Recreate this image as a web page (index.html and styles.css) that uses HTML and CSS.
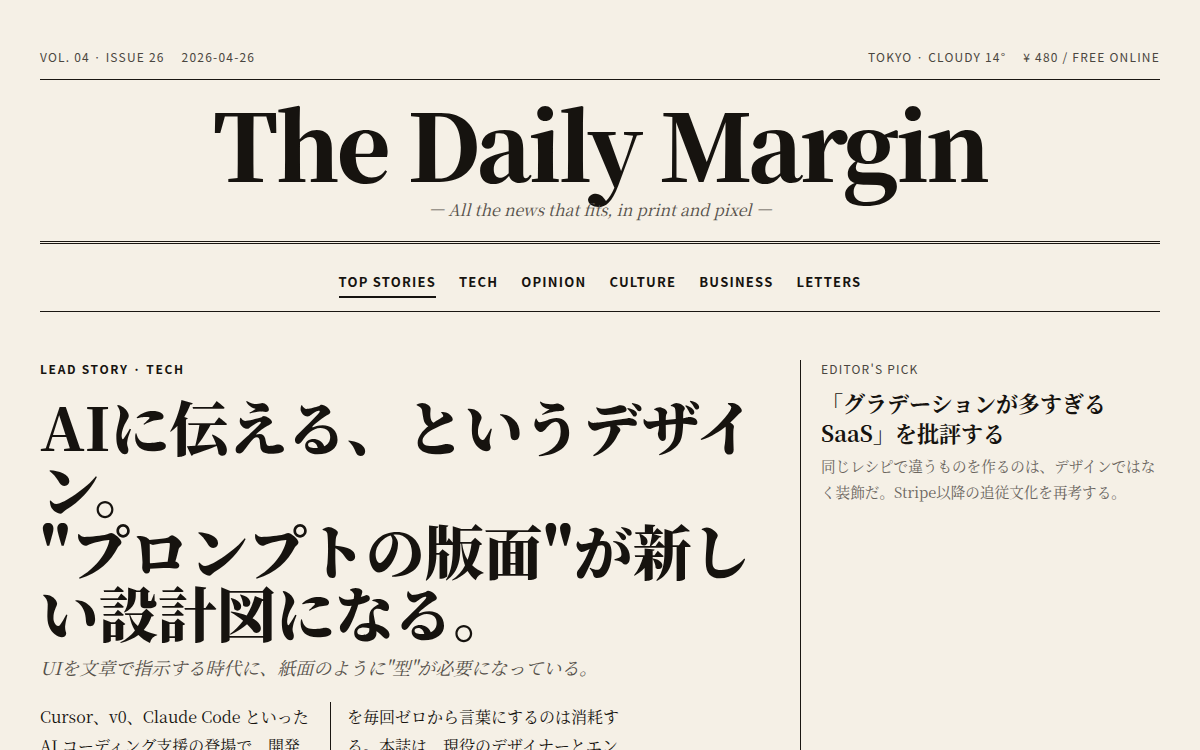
FILE: index.html
```html
<!DOCTYPE html>
<html lang="ja">
<head>
<meta charset="utf-8">
<title>The Daily Margin</title>
<link rel="stylesheet" href="styles.css">
</head>
<body>
<div class="page">
  <header class="meta">
    <div class="meta-group"><span>VOL. 04 · ISSUE 26</span><span>2026-04-26</span></div>
    <div class="meta-group"><span>TOKYO · CLOUDY 14°</span><span>¥ 480 / FREE ONLINE</span></div>
  </header>
  <div class="masthead">
    <h1 class="title">The Daily Margin</h1>
    <p class="tagline">— All the news that fits, in print and pixel —</p>
  </div>
  <nav class="nav">
    <a class="nav-item active">TOP STORIES</a>
    <a class="nav-item">TECH</a>
    <a class="nav-item">OPINION</a>
    <a class="nav-item">CULTURE</a>
    <a class="nav-item">BUSINESS</a>
    <a class="nav-item">LETTERS</a>
  </nav>
  <main class="main">
    <article class="lead">
      <div class="kicker">LEAD STORY · TECH</div>
      <h2 class="headline">AIに伝える、というデザイン。<br>"プロンプトの版面"が新しい設計図になる。</h2>
      <p class="dek">UIを文章で指示する時代に、紙面のように"型"が必要になっている。</p>
      <div class="body">
        <div class="col col-first">
          <p>Cursor、v0、Claude Code といったAI コーディング支援の登場で、開発者は画面の見た目を言葉で伝えるようになった。しかし、毎回の指示がばらばらでは結果も安定しない。余白、書体、色、階層。その一つひとつ</p>
        </div>
        <div class="col col-second">
          <p>を毎回ゼロから言葉にするのは消耗する。本誌は、現役のデザイナーとエンジニアに話を聞いた。</p>
        </div>
      </div>
    </article>
    <aside class="side">
      <div class="side-kicker">EDITOR'S PICK</div>
      <h3 class="side-title">「グラデーションが多すぎるSaaS」を批評する</h3>
      <p class="side-text">同じレシピで違うものを作るのは、デザインではなく装飾だ。Stripe以降の追従文化を再考する。</p>
    </aside>
  </main>
</div>
</body>
</html>
```

FILE: styles.css
```css
* { box-sizing: border-box; }
html, body { margin: 0; padding: 0; }
body {
  background: #f5f0e6;
  color: #16130f;
  font-family: "Noto Serif CJK JP", "Noto Serif", "Liberation Serif", serif;
  height: 750px;
  overflow: hidden;
}
.page { padding: 0 40px; }

.meta {
  display: flex;
  justify-content: space-between;
  align-items: center;
  padding-top: 48px;
  padding-bottom: 13px;
  border-bottom: 1px solid #1a1612;
  font-family: "Noto Sans CJK JP", "Noto Sans", sans-serif;
  font-size: 12px;
  line-height: 18px;
  letter-spacing: 0.1em;
  color: #4a4640;
}
.meta-group { display: flex; gap: 17px; }

.masthead { text-align: center; padding-top: 12px; }
.title {
  margin: 0;
  font-size: 92px;
  font-weight: 900;
  line-height: 100px;
  letter-spacing: -0.033em;
}
.tagline {
  margin: 6px 0 0;
  font-style: italic;
  font-size: 16px;
  line-height: 24px;
  color: #55504a;
}

.nav {
  margin-top: 19px;
  border-top: 3px double #1a1612;
  border-bottom: 1px solid #1a1612;
  display: flex;
  justify-content: center;
  gap: 23px;
  padding: 29px 0 13px;
}
.nav-item {
  font-family: "Noto Sans CJK JP", "Noto Sans", sans-serif;
  font-size: 13px;
  font-weight: 700;
  letter-spacing: 1.2px;
  line-height: 18px;
  padding-bottom: 5px;
  border-bottom: 2px solid transparent;
  color: #16130f;
}
.nav-item.active { border-bottom-color: #16130f; }

.main {
  display: grid;
  grid-template-columns: 1fr 360px;
  gap: 30px;
  margin-top: 48px;
}
.kicker {
  font-family: "Noto Sans CJK JP", "Noto Sans", sans-serif;
  font-size: 12px;
  font-weight: 700;
  letter-spacing: 0.14em;
  line-height: 18px;
}
.headline {
  margin: 17px 0 0;
  font-size: 59px;
  font-weight: 900;
  line-height: 62px;
}
.dek {
  margin: 10px 0 0;
  font-size: 18px;
  font-style: italic;
  line-height: 28px;
  color: #55504a;
}
.body {
  margin-top: 21px;
  display: grid;
  grid-template-columns: 290px 290px;
  font-size: 16px;
  line-height: 29px;
}
.col p { margin: 0; }
.col-first { padding-right: 17px; }
.col-second { border-left: 1px solid #1a1612; padding-left: 16px; }

.side {
  border-left: 1px solid #1a1612;
  padding-left: 20px;
}
.side-kicker {
  font-family: "Noto Sans CJK JP", "Noto Sans", sans-serif;
  font-size: 12px;
  letter-spacing: 0.1em;
  line-height: 18px;
  color: #4a4640;
}
.side-title {
  margin: 10px 0 0;
  font-size: 22px;
  font-weight: 700;
  line-height: 30px;
}
.side-text {
  margin: 5px 0 0;
  font-size: 14.6px;
  line-height: 26px;
  color: #6a655e;
}
```
